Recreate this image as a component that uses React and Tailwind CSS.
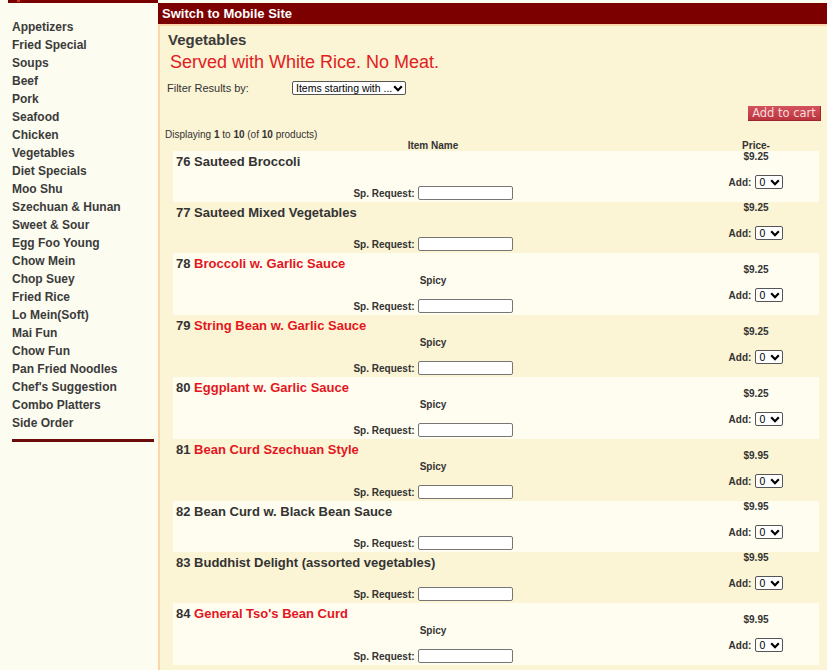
import React from "react";

const categories = [
  "Appetizers",
  "Fried Special",
  "Soups",
  "Beef",
  "Pork",
  "Seafood",
  "Chicken",
  "Vegetables",
  "Diet Specials",
  "Moo Shu",
  "Szechuan & Hunan",
  "Sweet & Sour",
  "Egg Foo Young",
  "Chow Mein",
  "Chop Suey",
  "Fried Rice",
  "Lo Mein(Soft)",
  "Mai Fun",
  "Chow Fun",
  "Pan Fried Noodles",
  "Chef's Suggestion",
  "Combo Platters",
  "Side Order",
];

const products = [
  { no: 76, name: "Sauteed Broccoli", price: "9.25" },
  { no: 77, name: "Sauteed Mixed Vegetables", price: "9.25" },
  { no: 78, name: "Broccoli w. Garlic Sauce", price: "9.25", spicy: true },
  { no: 79, name: "String Bean w. Garlic Sauce", price: "9.25", spicy: true },
  { no: 80, name: "Eggplant w. Garlic Sauce", price: "9.25", spicy: true },
  { no: 81, name: "Bean Curd Szechuan Style", price: "9.95", spicy: true },
  { no: 82, name: "Bean Curd w. Black Bean Sauce", price: "9.95" },
  { no: 83, name: "Buddhist Delight (assorted vegetables)", price: "9.95" },
  { no: 84, name: "General Tso's Bean Curd", price: "9.95", spicy: true },
  { no: 85, name: "Bean Curd Home Style w. Pork", price: "9.95", spicy: true },
];

const Chevron = () => (
  <svg width="10" height="7" viewBox="0 0 10 7" className="shrink-0">
    <path d="M1.2 1.3 5 5.2 8.8 1.3" fill="none" stroke="#000" strokeWidth="2.2" />
  </svg>
);

// little bordered dropdown like the browser default
const Dropdown = ({ value, width }) => (
  <span className="inline-flex h-[14px] items-center rounded-[2px] border border-[#555] bg-white pl-[3px] pr-[2px]">
    <select className={`${width} appearance-none bg-transparent text-[10.5px] leading-[12px] text-black outline-none`}>
      <option>{value}</option>
    </select>
    <Chevron />
  </span>
);

const ProductRow = ({ item, light }) => {
  const { no, name, price, spicy } = item;
  return (
    <div className={`flex ${spicy ? "h-[62px]" : "h-[51px]"} ${light ? "bg-[#fffdef]" : ""}`}>
      <div className="flex w-[520px] flex-col">
        <div className="h-[22px] pl-[3px] text-[13px] font-bold leading-[22px] text-[#333]">
          {no} <span className={spicy ? "text-[#e3161e]" : ""}>{name}</span>
        </div>
        {spicy && (
          <div className="h-[11px] text-center text-[10px] font-bold leading-[11px] text-[#333]">
            Spicy
          </div>
        )}
        <div className="mt-[13px] flex h-[14px] items-center justify-center gap-[3px]">
          <span className="text-[10px] font-bold text-[#333]">Sp. Request:</span>
          <input
            type="text"
            className="h-[14px] w-[95px] rounded-[2px] border border-[#767676] bg-white"
          />
        </div>
      </div>

      <div className={`flex w-[126px] flex-col items-center ${spicy ? "pt-[11px]" : ""}`}>
        <div className="h-[12px] text-[10px] font-bold leading-[12px] text-[#333]">${price}</div>
        <div className="mt-[12px] flex h-[14px] items-center gap-[4px]">
          <span className="text-[10px] font-bold text-[#333]">Add:</span>
          <Dropdown value="0" width="w-[11px]" />
        </div>
      </div>
    </div>
  );
};

export default function App() {
  return (
    <div className="flex min-h-[670px] w-[827px] bg-[#fdfcf0] font-['Liberation_Sans',Arial,sans-serif] text-[#333]">
      {/* CATEGORY MENU */}
      <aside className="w-[158px] shrink-0">
        <div className="ml-[8px] flex h-[3px] bg-[#7a0000]">
          <span className="ml-[9px] h-[2px] w-[3px] bg-[#c8372c]" />
        </div>
        <ul className="pl-[12px] pt-[15px]">
          {categories.map((c) => (
            <li key={c} className="cursor-pointer text-[12px] font-bold leading-[18px] text-[#3b3b3b]">
              {c}
            </li>
          ))}
        </ul>
        <div className="ml-[12px] mr-[4px] mt-[7px] h-[2.5px] bg-[#6b0b0b]" />
      </aside>

      {/* MAIN CONTENT */}
      <main className="flex flex-1 flex-col pt-[3px]">
        <div className="h-[21px] bg-[#7d0000] pl-[4px] text-[13px] font-bold leading-[21px] text-white">
          Switch to Mobile Site
        </div>

        <div className="flex-1 border-l-2 border-t-2 border-[#fcd6ab] bg-[#fbf4d5]">
          <h1 className="pl-[8px] pt-[5px] text-[15px] font-bold leading-[17px] text-[#3b3b3b]">Vegetables</h1>
          <p className="mt-[3px] pl-[10px] text-[18px] leading-[22px] text-[#e1201e]">
            Served with White Rice. No Meat.
          </p>

          <div className="mt-[8px] flex h-[14px] items-center pl-[7px]">
            <span className="w-[125px] text-[11px] text-[#333]">Filter Results by:</span>
            <Dropdown value="Items starting with ..." width="w-[97px]" />
          </div>

          <div className="mt-[11px] flex justify-end pr-[6px]">
            <button className="h-[15px] w-[73px] border-b border-r border-[#9e2431] bg-linear-to-b from-[#d4525d] to-[#bb3440] font-['DejaVu_Sans',sans-serif] text-[11.5px] leading-[14px] text-[#f7dcdc]">
              Add to cart
            </button>
          </div>

          <p className="mt-[8px] h-[12px] pl-[5px] text-[10px] leading-[12px] text-[#333]">
            Displaying <b>1</b> to <b>10</b> (of <b>10</b> products)
          </p>

          {/* PRODUCT LISTING */}
          <div className="ml-[13px] mr-[8px]">
            <div className="flex h-[10px] text-[10px] font-bold leading-[10px] text-[#333]">
              <span className="w-[520px] text-center">Item Name</span>
              <span className="w-[126px] text-center">Price-</span>
            </div>
            {products.map((p, i) => (
              <ProductRow key={p.no} item={p} light={i % 2 === 0} />
            ))}
          </div>
        </div>
      </main>
    </div>
  );
}
